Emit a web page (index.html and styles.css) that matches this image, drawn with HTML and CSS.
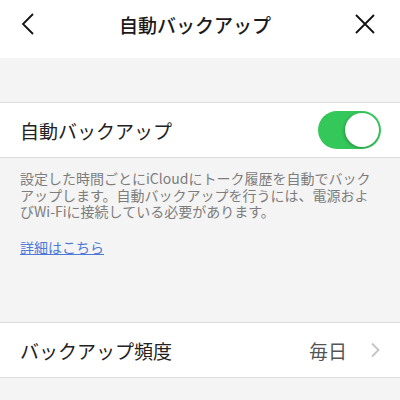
FILE: index.html
```html
<!DOCTYPE html>
<html>
<head>
    <meta charset="utf-8">
    <link rel="stylesheet" href="styles.css">
</head>
<body>
    <div class="header">
        <svg class="back" width="16" height="24" viewBox="0 0 16 24">
            <path d="M13 2 L3 12 L13 22" fill="none" stroke="#111" stroke-width="1.8"/>
        </svg>
        <div class="title">自動バックアップ</div>
        <svg class="close" width="22" height="22" viewBox="0 0 22 22">
            <path d="M2 2 L20 20 M20 2 L2 20" fill="none" stroke="#111" stroke-width="1.8"/>
        </svg>
    </div>
    <div class="spacer"></div>
    <div class="row">
        <span class="label">自動バックアップ</span>
        <div class="toggle"><div class="knob"></div></div>
    </div>
    <div class="note">
        <p>設定した時間ごとにiCloudにトーク履歴を自動でバックアップします。自動バックアップを行うには、電源およびWi-Fiに接続している必要があります。</p>
        <a href="#" class="more">詳細はこちら</a>
    </div>
    <div class="row">
        <span class="label">バックアップ頻度</span>
        <span class="value">毎日</span>
        <svg class="chev" width="10" height="16" viewBox="0 0 10 16">
            <path d="M2 1.5 L8.5 8 L2 14.5" fill="none" stroke="#c4c4c8" stroke-width="1.8"/>
        </svg>
    </div>
</body>
</html>
```

FILE: styles.css
```css
body {
    margin: 0;
    background: #f4f4f4;
    font-family: "Noto Sans CJK JP", "Noto Sans", sans-serif;
    color: #222;
}
.header {
    height: 58px;
    background: #fff;
    display: flex;
    align-items: center;
    padding: 0 24px 10px 20px;
    box-sizing: border-box;
}
.title {
    flex: 1;
    text-align: center;
    font-size: 19px;
    font-weight: 500;
    color: #1a1a1a;
}
.spacer {
    height: 44px;
}
.row {
    height: 56px;
    background: #fff;
    border-top: 1px solid #dcdcdc;
    border-bottom: 1px solid #dcdcdc;
    display: flex;
    align-items: center;
    padding: 0 19px 0 20px;
    box-sizing: border-box;
}
.label {
    flex: 1;
    font-size: 19px;
    color: #222;
}
.toggle {
    width: 63px;
    height: 38px;
    border-radius: 19px;
    background: #34c759;
    display: flex;
    align-items: center;
    justify-content: flex-end;
    padding: 2px;
    box-sizing: border-box;
}
.knob {
    width: 34px;
    height: 34px;
    border-radius: 50%;
    background: #fff;
    box-shadow: -1px 1px 3px rgba(0, 0, 0, 0.25);
}
.note {
    height: 164px;
    padding: 12px 20px 0 20px;
    box-sizing: border-box;
    font-size: 14px;
    line-height: 16.7px;
    color: #7d7d7d;
}
.note p {
    margin: 0 0 19px 0;
}
.more {
    color: #4f79d8;
    text-decoration: underline;
}
.value {
    font-size: 19px;
    color: #555;
    margin-right: 23px;
}
.chev {
    margin-right: 1px;
}
```
